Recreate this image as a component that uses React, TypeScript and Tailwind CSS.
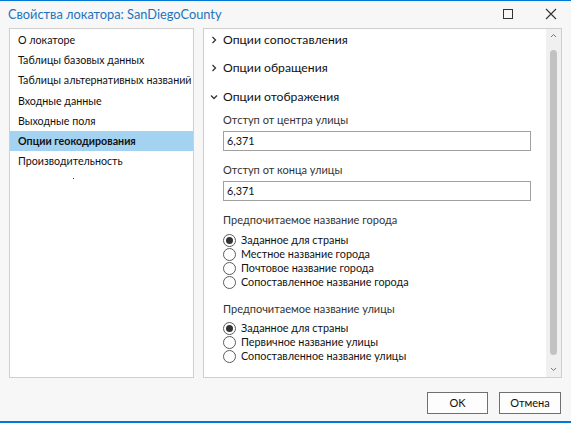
import React from "react";

const font = { fontFamily: 'Lato, Roboto, "Noto Sans", sans-serif' };

function Radio({ checked, label }: { checked?: boolean; label: string }) {
  return (
    <div className="flex items-center h-[14px]">
      <span className="w-[13px] h-[13px] rounded-full border border-[#5a5a5a] bg-white flex items-center justify-center shrink-0">
        {checked && <span className="w-[7px] h-[7px] rounded-full bg-[#333333]" />}
      </span>
      <span className="ml-[5px] text-[10.8px] text-[#111111] leading-none">{label}</span>
    </div>
  );
}

function Chevron({ down }: { down?: boolean }) {
  return (
    <svg width="8" height="8" viewBox="0 0 8 8" className="shrink-0">
      {down ? (
        <path d="M1 2.5 L4 5.5 L7 2.5" fill="none" stroke="#333" strokeWidth="1.3" />
      ) : (
        <path d="M2.5 1 L5.5 4 L2.5 7" fill="none" stroke="#333" strokeWidth="1.3" />
      )}
    </svg>
  );
}

export default function App() {
  const items = [
    "О локаторе",
    "Таблицы базовых данных",
    "Таблицы альтернативных названий",
    "Входные данные",
    "Выходные поля",
    "Опции геокодирования",
    "Производительность",
  ];
  return (
    <div
      style={font}
      className="w-[571px] h-[423px] bg-[#f6f7f6] border-t border-b-2 border-[#0078d7] flex flex-col overflow-hidden"
    >
      {/* Title bar */}
      <div className="h-[26px] flex items-center pl-[8px] pr-[14px] shrink-0">
        <div className="text-[12.8px] text-[#1e73be] leading-none flex-1">Свойства локатора: SanDiegoCounty</div>
        <div className="w-[10px] h-[10px] border border-[#333] mr-[32px]" />
        <svg width="12" height="12" viewBox="0 0 12 12">
          <path d="M1 1 L11 11 M11 1 L1 11" stroke="#333" strokeWidth="1.1" />
        </svg>
      </div>

      {/* Content */}
      <div className="flex gap-[9px] px-[9px] h-[350px] shrink-0 mt-[1px]">
        <div className="w-[185px] bg-white border border-[#cfcfcf] overflow-hidden pt-[1px] relative">
          {items.map((t, i) => (
            <div
              key={t}
              className={
                "h-[20.2px] flex items-center pl-[8px] whitespace-nowrap text-[10.7px] text-[#111111] " +
                (i === 5 ? "bg-[#a4d3f2] font-bold" : "")
              }
            >
              {t}
            </div>
          ))}
          <span className="absolute left-[63px] top-[149px] w-[1px] h-[1px] bg-[#333]" />
        </div>

        <div className="flex-1 bg-white border border-[#cfcfcf] flex overflow-hidden">
          <div className="flex-1 pl-[6px] pt-[1px]">
            <div className="h-[20px] flex items-center gap-[5px]">
              <Chevron />
              <span className="text-[12.2px] text-[#111111]">Опции сопоставления</span>
            </div>
            <div className="h-[20px] flex items-center gap-[5px] mt-[8px]">
              <Chevron />
              <span className="text-[12.2px] text-[#111111]">Опции обращения</span>
            </div>
            <div className="h-[20px] flex items-center gap-[5px] mt-[9px]">
              <Chevron down />
              <span className="text-[12.2px] text-[#111111]">Опции отображения</span>
            </div>
            <div className="pl-[13px]">
              <div className="text-[11px] text-[#333] mt-[6px] h-[14px] leading-[14px]">Отступ от центра улицы</div>
              <div className="mt-[4px] w-[308px] h-[20px] border border-[#a0a0a0] flex items-center pl-[3px] text-[10.8px] text-[#111111]">6,371</div>
              <div className="text-[11px] text-[#333] mt-[12px] h-[14px] leading-[14px]">Отступ от конца улицы</div>
              <div className="mt-[4px] w-[308px] h-[20px] border border-[#a0a0a0] flex items-center pl-[3px] text-[10.8px] text-[#111111]">6,371</div>
              <div className="text-[11px] text-[#333] mt-[12px] h-[14px] leading-[14px]">Предпочитаемое название города</div>
              <div className="mt-[6px] flex flex-col">
                <Radio checked label="Заданное для страны" />
                <Radio label="Местное название города" />
                <Radio label="Почтовое название города" />
                <Radio label="Сопоставленное название города" />
              </div>
              <div className="text-[11px] text-[#333] mt-[13px] h-[14px] leading-[14px]">Предпочитаемое название улицы</div>
              <div className="mt-[5px] flex flex-col">
                <Radio checked label="Заданное для страны" />
                <Radio label="Первичное название улицы" />
                <Radio label="Сопоставленное название улицы" />
              </div>
            </div>
          </div>
          {/* Scrollbar */}
          <div className="w-[15px] bg-[#f0f0f0] flex flex-col items-center">
            <svg width="7" height="5" viewBox="0 0 7 5" className="mt-[4px]">
              <path d="M1 4 L3.5 1.5 L6 4" fill="none" stroke="#777" strokeWidth="1" />
            </svg>
            <div className="w-[7px] flex-1 mt-[12px] mb-[12px] rounded-full bg-[#c2c2c2]" />
            <svg width="7" height="5" viewBox="0 0 7 5" className="mb-[5px]">
              <path d="M1 1 L3.5 3.5 L6 1" fill="none" stroke="#777" strokeWidth="1" />
            </svg>
          </div>
        </div>
      </div>

      {/* Buttons */}
      <div className="flex justify-end gap-[11px] pr-[10px] mt-[14px]">
        <button className="w-[61px] h-[22px] border border-[#707070] bg-[#fdfdfd] text-[11px] text-[#111111]">OK</button>
        <button className="w-[62px] h-[22px] border border-[#707070] bg-[#fdfdfd] text-[11px] text-[#111111]">Отмена</button>
      </div>
    </div>
  );
}
